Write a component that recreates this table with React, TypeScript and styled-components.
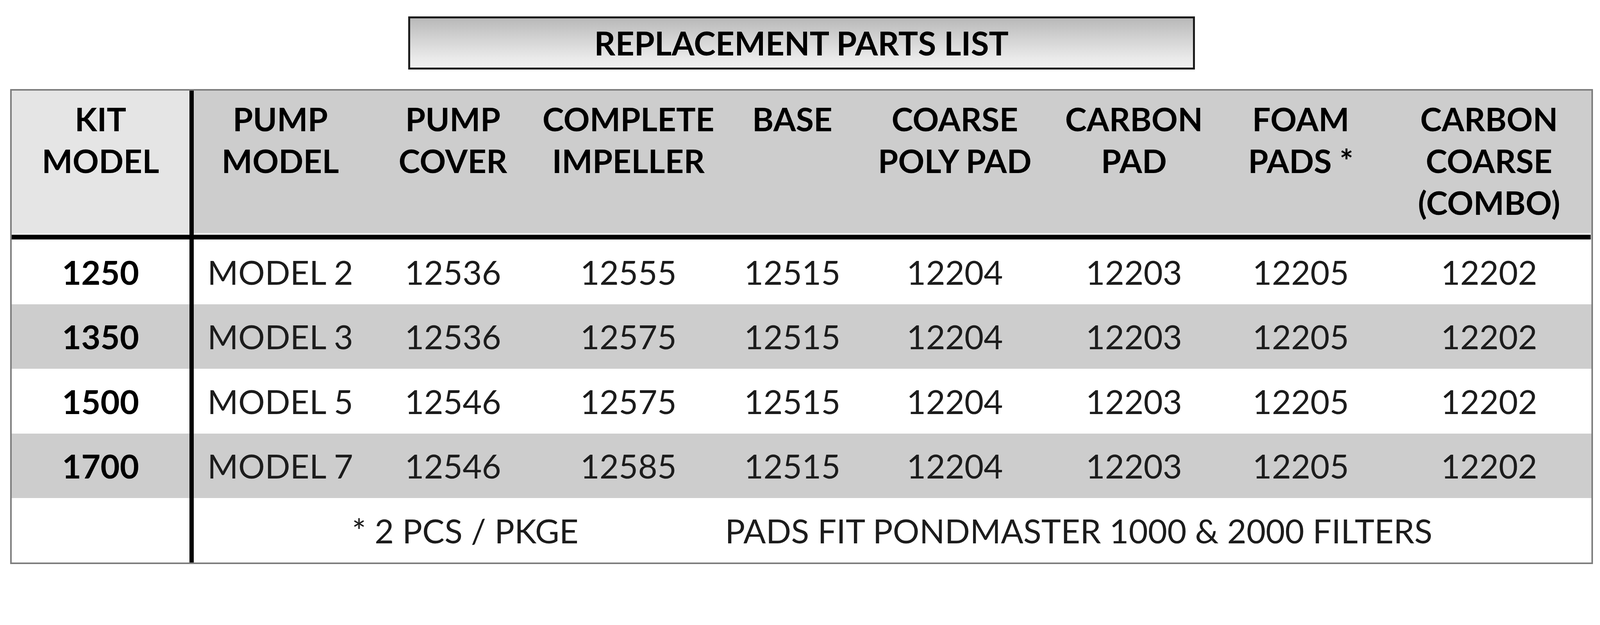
import styled, { createGlobalStyle } from "styled-components";

const GlobalStyle = createGlobalStyle`
  html, body {
    margin: 0;
    padding: 0;
    background: #ffffff;
    overflow: hidden;
  }
  body {
    font-family: "Lato", "Liberation Sans", sans-serif;
    color: #111;
  }
`;

const Page = styled.div`
  width: 4431px;
  height: 1600px;
  padding: 45px 0 0 28px;
  box-sizing: border-box;
  display: flex;
  flex-direction: column;
  align-items: flex-start;
`;

const TitleRow = styled.div`
  width: 4383px;
  display: flex;
  justify-content: center;
  margin-bottom: 54px;
`;

const TitleBox = styled.div`
  width: 2179px;
  height: 148px;
  box-sizing: border-box;
  border: 6px solid #1c1c1c;
  background: linear-gradient(to bottom, #b9b9b9 0%, #cfcfcf 35%, #e9e9e9 80%, #f1f1f1 100%);
  display: flex;
  align-items: center;
  justify-content: center;
  font-weight: 700;
  font-size: 91px;
  color: #000;
`;

const columns = "504px 480px 476px 496px 412px 488px 504px 420px 593px";

const Table = styled.div`
  width: 4383px;
  box-sizing: border-box;
  border: 5px solid #7d7d7d;
  display: flex;
  flex-direction: column;
`;

const Row = styled.div<{ shade: string; tall?: boolean }>`
  display: grid;
  grid-template-columns: ${columns};
  height: ${(p) => (p.tall ? "412px" : "179px")};
  background: ${(p) => p.shade};
  box-sizing: border-box;
`;

const HeadCell = styled.div<{ shade: string; first?: boolean }>`
  background: ${(p) => p.shade};
  border-bottom: 14px solid #000;
  border-right: ${(p) => (p.first ? "12px solid #000" : "none")};
  box-shadow: inset 0 -5px 0 #eeeeee;
  box-sizing: border-box;
  padding-top: 20px;
  font-weight: 700;
  font-size: 90px;
  line-height: 116px;
  text-align: center;
  white-space: nowrap;
  color: #000;
  display: flex;
  flex-direction: column;
  align-items: center;

  &:last-child {
    padding-left: 30px;
  }
`;

const Cell = styled.div<{ first?: boolean }>`
  border-right: ${(p) => (p.first ? "12px solid #000" : "none")};
  box-sizing: border-box;
  display: flex;
  align-items: center;
  justify-content: center;
  white-space: nowrap;
  font-size: 92px;
  font-weight: ${(p) => (p.first ? 700 : 400)};
  color: ${(p) => (p.first ? "#000" : "#1c1c1c")};

  &:nth-child(9) {
    padding-left: 30px;
  }
`;

const FootNote = styled.div`
  grid-column: 2 / span 8;
  display: flex;
  align-items: center;
  justify-content: center;
  gap: 406px;
  font-size: 92px;
  color: #1c1c1c;
  white-space: nowrap;
`;

const headers: string[][] = [
  ["PUMP", "MODEL"],
  ["PUMP", "COVER"],
  ["COMPLETE", "IMPELLER"],
  ["BASE"],
  ["COARSE", "POLY PAD"],
  ["CARBON", "PAD"],
  ["FOAM", "PADS *"],
  ["CARBON", "COARSE", "(COMBO)"],
];

const rows: string[][] = [
  ["1250", "MODEL 2", "12536", "12555", "12515", "12204", "12203", "12205", "12202"],
  ["1350", "MODEL 3", "12536", "12575", "12515", "12204", "12203", "12205", "12202"],
  ["1500", "MODEL 5", "12546", "12575", "12515", "12204", "12203", "12205", "12202"],
  ["1700", "MODEL 7", "12546", "12585", "12515", "12204", "12203", "12205", "12202"],
];

export default function App() {
  // the sheet is laid out at 4431px; fit it to whatever the viewport really is
  const fit = typeof window !== "undefined" ? window.innerWidth / 4431 : 1;

  return (
    <>
      <GlobalStyle />
      <Page style={{ zoom: fit }}>
        <TitleRow>
          <TitleBox>REPLACEMENT PARTS LIST</TitleBox>
        </TitleRow>
        <Table>
          <Row shade="#cdcdcd" tall>
            <HeadCell shade="#e5e5e5" first>
              <span>KIT</span>
              <span>MODEL</span>
            </HeadCell>
            {headers.map((lines, i) => (
              <HeadCell key={i} shade="#cdcdcd">
                {lines.map((l) => (
                  <span key={l}>{l}</span>
                ))}
              </HeadCell>
            ))}
          </Row>
          {rows.map((r, i) => (
            <Row key={r[0]} shade={i % 2 === 0 ? "#ffffff" : "#cdcdcd"}>
              {r.map((v, j) => (
                <Cell key={j} first={j === 0}>
                  {v}
                </Cell>
              ))}
            </Row>
          ))}
          <Row shade="#ffffff">
            <Cell first />
            <FootNote>
              <span>* 2 PCS / PKGE</span>
              <span>PADS FIT PONDMASTER 1000 &amp; 2000 FILTERS</span>
            </FootNote>
          </Row>
        </Table>
      </Page>
    </>
  );
}
